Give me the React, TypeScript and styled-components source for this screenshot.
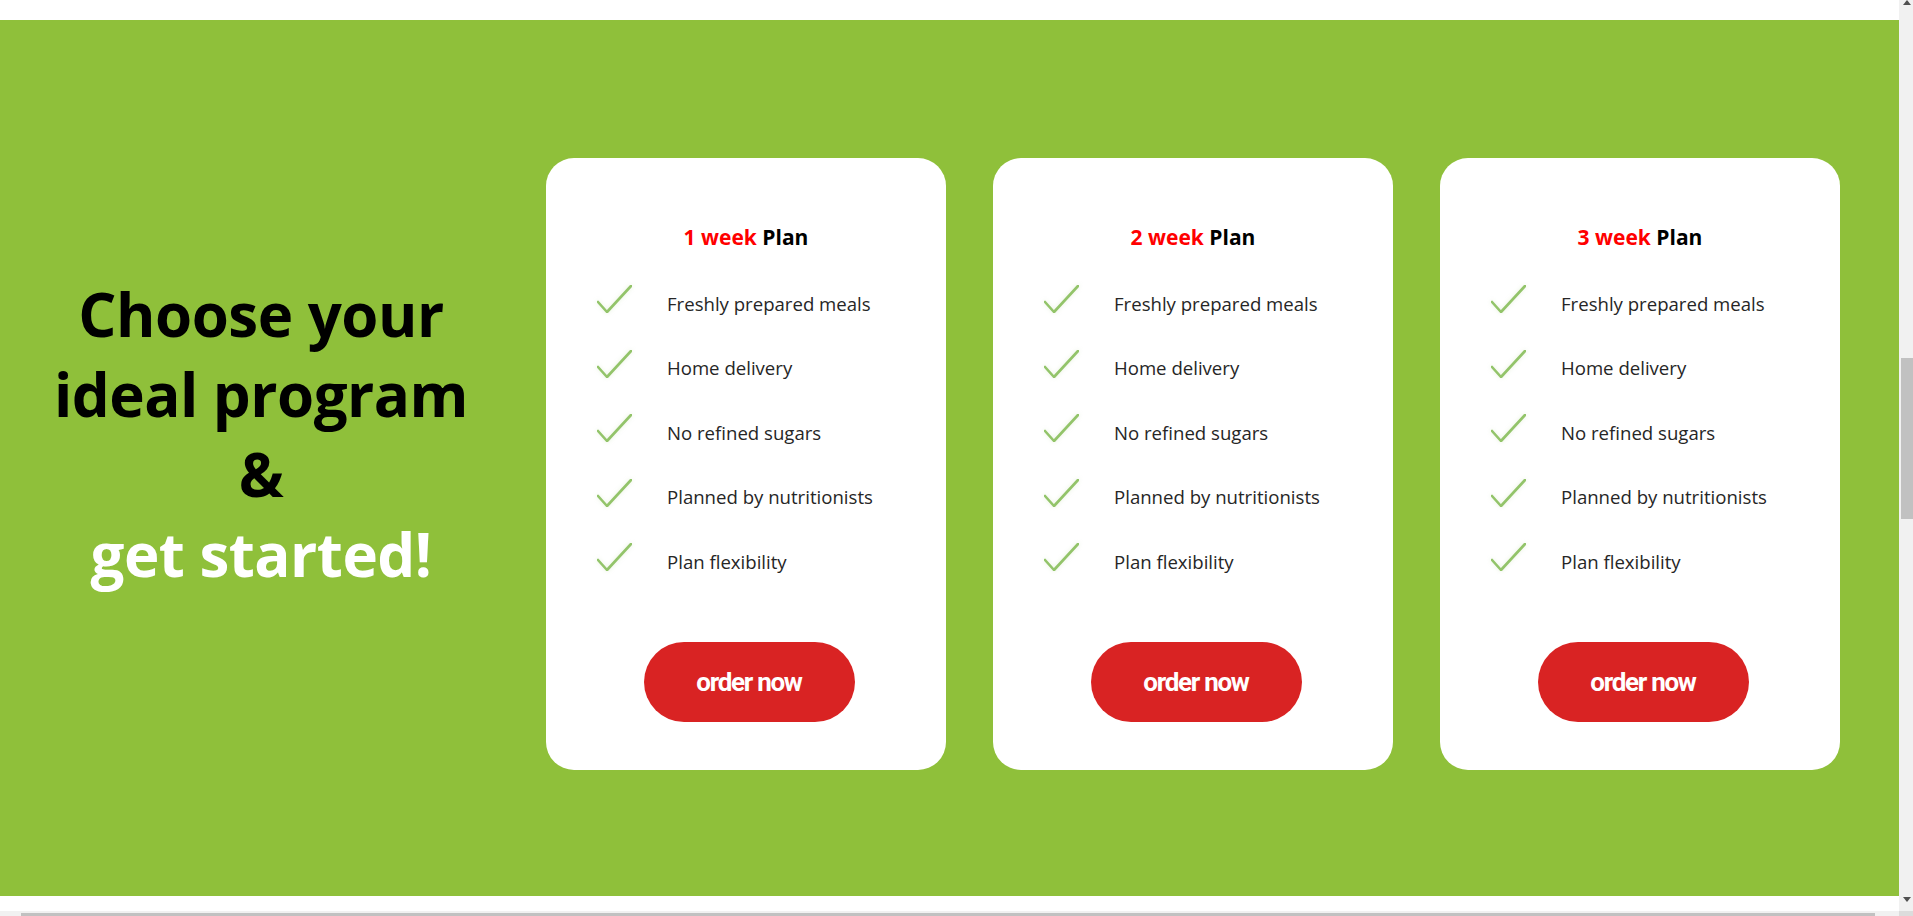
import React from "react";
import styled, { createGlobalStyle } from "styled-components";

const Global = createGlobalStyle`
  html, body { margin: 0; padding: 0; overflow: hidden; background: #fff; }
  * { box-sizing: border-box; }
`;

const Viewport = styled.div`
  width: 1913px;
  height: 916px;
  display: grid;
  grid-template-columns: 1899px 14px;
  grid-template-rows: 911px 5px;
  overflow: hidden;
`;

const Page = styled.main`
  display: flex;
  flex-direction: column;
  overflow: hidden;
  padding-top: 20px;
  background: #fff;
`;

const Section = styled.section`
  height: 876px;
  background: #8fc03a;
  display: flex;
  align-items: flex-start;
  padding-top: 138px;
  font-family: "Open Sans", "Noto Sans", sans-serif;
`;

const Intro = styled.h2`
  width: 522px;
  margin: 116px 24px 0 0;
  text-align: center;
  font-size: 60px;
  line-height: 80px;
  font-weight: 700;
  color: #000;
  letter-spacing: -0.5px;
`;

const Light = styled.span`
  color: #fff;
`;

const Cards = styled.div`
  display: flex;
  gap: 47px;
`;

const Card = styled.article`
  width: 400px;
  height: 612px;
  background: #fff;
  border-radius: 28px;
  padding: 65px 0 48px;
  display: flex;
  flex-direction: column;
  align-items: stretch;
`;

const Title = styled.h3`
  margin: 0 0 20px;
  text-align: center;
  font-size: 21px;
  line-height: 28px;
  font-weight: 700;
  color: #000;
`;

const Accent = styled.span`
  color: #ff0000;
`;

const List = styled.ul`
  list-style: none;
  margin: 0;
  padding: 0 0 0 51px;
`;

const Item = styled.li`
  height: 64.5px;
  display: flex;
  align-items: center;
  gap: 35px;
  font-size: 18.6px;
  color: #262626;
`;

const Check = styled.svg`
  width: 35px;
  height: 28px;
  flex: none;
  margin-bottom: 8px;
  filter: drop-shadow(0 0 2px rgba(160, 200, 120, 0.25));
`;

const OrderButton = styled.button`
  margin: auto auto 0;
  width: 211px;
  height: 80px;
  border: none;
  border-radius: 40px;
  background: #d92323;
  color: #fff;
  font-family: Roboto, "Liberation Sans", sans-serif;
  font-weight: 700;
  font-size: 26px;
  letter-spacing: -1.3px;
  cursor: pointer;
  position: relative;
  left: 3px;
`;

const VBar = styled.div`
  grid-row: 1;
  grid-column: 2;
  background: #f1f1f1;
  display: flex;
  flex-direction: column;
  align-items: flex-end;
`;

const Arrow = styled.div<{ $down?: boolean }>`
  width: 0;
  height: 0;
  margin-right: 2px;
  border-left: 4px solid transparent;
  border-right: 4px solid transparent;
  ${(p) =>
    p.$down
      ? "border-top: 5px solid #505050; margin-top: auto; margin-bottom: 9px;"
      : "border-bottom: 5px solid #505050;"}
`;

const VThumb = styled.div<{ $top: number; $h: number }>`
  width: 12px;
  height: ${(p) => p.$h}px;
  margin-top: ${(p) => p.$top}px;
  background: #c1c1c1;
`;

const HBar = styled.div`
  grid-row: 2;
  grid-column: 1;
  background: #f1f1f1;
  padding: 2px 0 0 21px;
`;

const HThumb = styled.div`
  width: 1854px;
  height: 3px;
  background: #c1c1c1;
`;

const Corner = styled.div`
  grid-row: 2;
  grid-column: 2;
  background: #dcdcdc;
`;

const features = [
  "Freshly prepared meals",
  "Home delivery",
  "No refined sugars",
  "Planned by nutritionists",
  "Plan flexibility",
];

const plans = ["1 week", "2 week", "3 week"];

const CheckIcon = () => (
  <Check viewBox="0 0 35 28">
    <path
      d="M1 17 L10 27 L34 1"
      fill="none"
      stroke="#93c46a"
      strokeWidth="2.6"
      strokeLinecap="round"
      strokeLinejoin="round"
    />
  </Check>
);

export default function App() {
  return (
    <>
      <Global />
      <Viewport>
        <Page>
          <Section>
            <Intro>
              Choose your
              <br />
              ideal program
              <br />
              &amp;
              <br />
              <Light>get started!</Light>
            </Intro>
            <Cards>
              {plans.map((p) => (
                <Card key={p}>
                  <Title>
                    <Accent>{p}</Accent> Plan
                  </Title>
                  <List>
                    {features.map((f) => (
                      <Item key={f}>
                        <CheckIcon />
                        <span>{f}</span>
                      </Item>
                    ))}
                  </List>
                  <OrderButton>order now</OrderButton>
                </Card>
              ))}
            </Cards>
          </Section>
        </Page>
        <VBar>
          <Arrow />
          <VThumb $top={353} $h={161} />
          <Arrow $down />
        </VBar>
        <HBar>
          <HThumb />
        </HBar>
        <Corner />
      </Viewport>
    </>
  );
}
